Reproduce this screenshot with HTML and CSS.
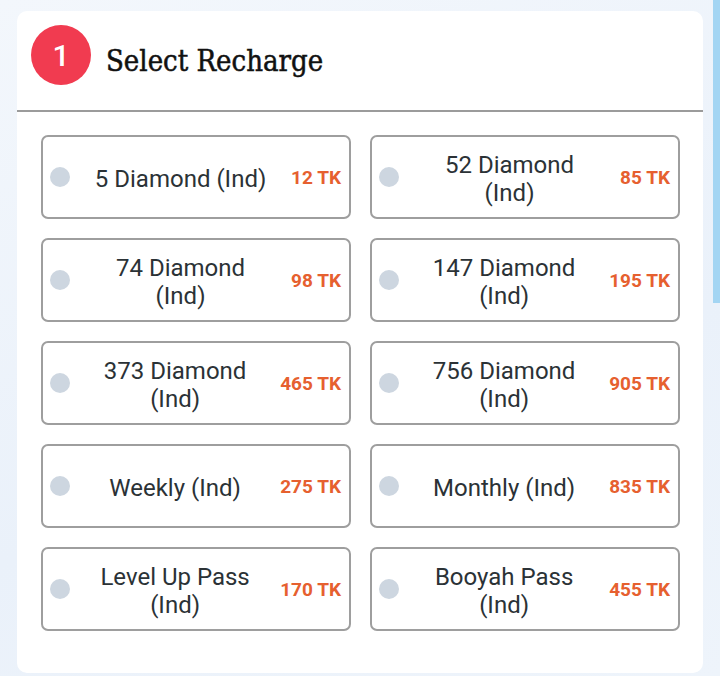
FILE: index.html
```html
<!DOCTYPE html>
<html lang="en">

<head>
    <meta charset="UTF-8">
    <title>Select Recharge</title>
    <link rel="stylesheet" href="styles.css">
</head>

<body>
    <div class="card">
        <div class="card-head">
            <span class="step">1</span>
            <h2>Select Recharge</h2>
        </div>
        <div class="options">
            <label class="option">
                <span class="dot"></span>
                <span class="name">5 Diamond (Ind)</span>
                <span class="price">12 TK</span>
            </label>
            <label class="option">
                <span class="dot"></span>
                <span class="name">52 Diamond (Ind)</span>
                <span class="price">85 TK</span>
            </label>
            <label class="option">
                <span class="dot"></span>
                <span class="name">74 Diamond (Ind)</span>
                <span class="price">98 TK</span>
            </label>
            <label class="option">
                <span class="dot"></span>
                <span class="name">147 Diamond (Ind)</span>
                <span class="price">195 TK</span>
            </label>
            <label class="option">
                <span class="dot"></span>
                <span class="name">373 Diamond (Ind)</span>
                <span class="price">465 TK</span>
            </label>
            <label class="option">
                <span class="dot"></span>
                <span class="name">756 Diamond (Ind)</span>
                <span class="price">905 TK</span>
            </label>
            <label class="option">
                <span class="dot"></span>
                <span class="name">Weekly (Ind)</span>
                <span class="price">275 TK</span>
            </label>
            <label class="option">
                <span class="dot"></span>
                <span class="name">Monthly (Ind)</span>
                <span class="price">835 TK</span>
            </label>
            <label class="option">
                <span class="dot"></span>
                <span class="name">Level Up Pass (Ind)</span>
                <span class="price">170 TK</span>
            </label>
            <label class="option">
                <span class="dot"></span>
                <span class="name">Booyah Pass (Ind)</span>
                <span class="price">455 TK</span>
            </label>
        </div>
    </div>
    <div class="side-bar"></div>
</body>

</html>
```

FILE: styles.css
```css
body {
    background-color: #eef4fb; /* Pale blue page */
    background-image: linear-gradient(160deg, #f3f7fc 0%, #eaf1fa 60%, #eef4fb 100%);
    font-family: Roboto, "Noto Sans", sans-serif;
    margin: 0;
    padding: 0;
    height: 676px;
    overflow: hidden;
    display: flex;
    align-items: flex-start;
}

.card {
    background-color: #ffffff;
    width: 686px;
    margin: 11px 0 0 17px;
    border-radius: 10px;
    padding-bottom: 42px;
}

.card-head {
    display: flex;
    align-items: center;
    padding: 14px 14px 25px 14px;
    border-bottom: 2px solid #9b9b9b; /* Gray divider under the title */
}

.step {
    width: 60px;
    height: 60px;
    border-radius: 50%;
    background-color: #f13b50;
    color: #ffffff;
    font-size: 30px;
    font-weight: 500;
    display: flex;
    justify-content: center;
    align-items: center;
}

.card-head h2 {
    margin: 0 0 0 15px;
    font-family: "DejaVu Serif Condensed", "DejaVu Serif", serif;
    font-stretch: condensed;
    font-weight: normal;
    font-size: 29px;
    -webkit-text-stroke: 0.5px #111111; /* a touch heavier than regular */
    color: #111111;
    padding-top: 11px;
}

.options {
    display: grid;
    grid-template-columns: 1fr 1fr;
    gap: 19px;
    padding: 23px 23px 0 24px;
}

.option {
    display: flex;
    align-items: center;
    height: 84px;
    box-sizing: border-box;
    border: 2px solid #9e9e9e;
    border-radius: 7px;
    padding: 0 8px 0 7px;
    cursor: pointer;
}

.dot {
    width: 20px;
    height: 20px;
    border-radius: 50%;
    background-color: #cdd6e0;
    flex-shrink: 0;
}

.name {
    flex: 1;
    text-align: center;
    padding: 3px 20px 0 20px;
    font-size: 24px;
    line-height: 28px;
    color: #2b3236;
}

.price {
    font-size: 19px;
    font-weight: bold;
    color: #e6602f; /* Orange price tag */
    white-space: nowrap;
}

.side-bar {
    width: 7px;
    height: 303px;
    margin-left: 10px;
    background-color: #a3d5f3;
}
```
